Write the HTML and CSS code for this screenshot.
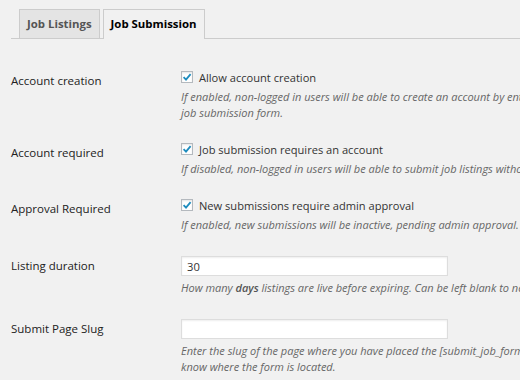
FILE: index.html
```html
<!DOCTYPE html>
<html>
<head lang="en">
    <meta charset="UTF-8">
    <title>Job Manager settings</title>
    <link rel="stylesheet" href="styles.css">
</head>
<body>
<div class="wrap">
    <nav class="tabs">
        <a class="tab">Job Listings</a>
        <a class="tab active">Job Submission</a>
    </nav>

    <div class="formTable">
        <div class="row">
            <div class="th">Account creation</div>
            <div class="td">
                <label class="check"><span class="box"><svg viewBox="0 0 12 12" width="12" height="12"><path d="M2.6 6.2 L5 8.6 L9.6 3.2" /></svg></span>Allow account creation</label>
                <p class="desc">If enabled, non-logged in users will be able to create an account by entering their email address on the job submission form.</p>
            </div>
        </div>
        <div class="row">
            <div class="th">Account required</div>
            <div class="td">
                <label class="check"><span class="box"><svg viewBox="0 0 12 12" width="12" height="12"><path d="M2.6 6.2 L5 8.6 L9.6 3.2" /></svg></span>Job submission requires an account</label>
                <p class="desc">If disabled, non-logged in users will be able to submit job listings without creating an account.</p>
            </div>
        </div>
        <div class="row">
            <div class="th">Approval Required</div>
            <div class="td">
                <label class="check"><span class="box"><svg viewBox="0 0 12 12" width="12" height="12"><path d="M2.6 6.2 L5 8.6 L9.6 3.2" /></svg></span>New submissions require admin approval</label>
                <p class="desc">If enabled, new submissions will be inactive, pending admin approval.</p>
            </div>
        </div>
        <div class="row field">
            <div class="th">Listing duration</div>
            <div class="td">
                <input class="text" type="text" value="30">
                <p class="desc">How many <b>days</b> listings are live before expiring. Can be left blank to never expire.</p>
            </div>
        </div>
        <div class="row field">
            <div class="th">Submit Page Slug</div>
            <div class="td">
                <input class="text" type="text" value="">
                <p class="desc">Enter the slug of the page where you have placed the [submit_job_form] shortcode. This lets the plugin know where the form is located.</p>
            </div>
        </div>
    </div>
</div>
</body>
</html>
```

FILE: styles.css
```css
html, body{
    margin: 0;
    background-color: #f1f1f1;
    overflow: hidden;
}
body{
    font-family: "Open Sans", "Liberation Sans", sans-serif;
    color: #333;
    font-size: 12px;
}
.wrap{
    width: 760px;
    padding-left: 11px;
}
.tabs{
    display: flex;
    gap: 3px;
    margin-top: 9px;
    padding-left: 8px;
    border-bottom: 1px solid #ccc;
}
.tab{
    display: block;
    padding: 0 7px;
    height: 28px;
    line-height: 28px;
    margin-bottom: -1px;
    font-size: 11.4px;
    font-weight: 700;
    color: #555;
    background-color: #e4e4e4;
    border: 1px solid #ccc;
    border-bottom: none;
}
.tab.active{
    color: #000;
    background-color: #f1f1f1;
    height: 29px;
}
.formTable{
    margin-top: 19px;
}
.row{
    display: grid;
    grid-template-columns: 170px 1fr;
}
.th{
    padding-top: 15px;
    line-height: 16px;
    font-size: 11.5px;
    color: #222;
}
.row.field .th{
    padding-top: 16px;
}
.td{
    padding: 9px 0;
}
.check{
    display: flex;
    align-items: center;
    height: 20px;
    font-size: 11.1px;
    color: #333;
}
.box{
    width: 10px;
    height: 10px;
    margin-right: 6px;
    border: 1px solid #b4b9be;
    background-color: #fff;
    box-shadow: inset 0 1px 2px rgba(0, 0, 0, 0.1);
    position: relative;
}
.box svg{
    position: absolute;
    top: -1px;
    left: -1px;
    fill: none;
    stroke: #1e8cbe;
    stroke-width: 1.8;
}
.desc{
    margin: 2px 0 0;
    width: 510px;
    line-height: 16px;
    font-size: 11px;
    font-style: italic;
    color: #666;
}
.desc b{
    font-weight: 600;
    color: #555;
}
.row.field .desc{
    margin-top: 4px;
}
.text{
    display: block;
    box-sizing: border-box;
    width: 267px;
    height: 20px;
    margin: 5px 0 0;
    padding: 0 5px;
    font-family: inherit;
    font-size: 11.2px;
    color: #333;
    background-color: #fff;
    border: 1px solid #ddd;
    box-shadow: inset 0 1px 2px rgba(0, 0, 0, 0.07);
    outline: none;
}
```
